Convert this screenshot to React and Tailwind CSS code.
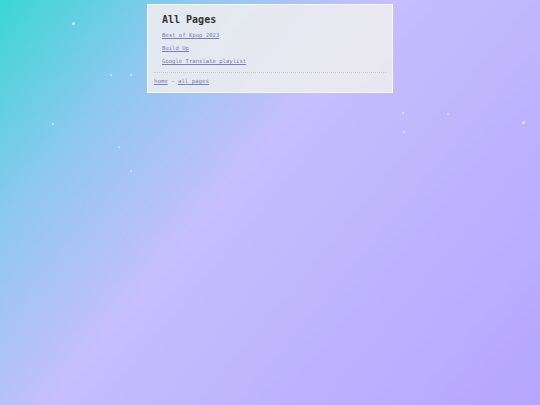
import React from 'react';

const pages = ['Best of Kpop 2023', 'Build Up', 'Google Translate playlist'];

const sparkles = [
  [72, 22, 3],
  [110, 74, 2],
  [130, 74, 2],
  [52, 123, 2],
  [118, 146, 2],
  [130, 170, 2],
  [403, 131, 2],
  [447, 113, 2],
  [522, 121, 3],
  [402, 112, 2],
];

const App = () => {
  return (
    <div className="relative w-[540px] h-[405px] overflow-hidden bg-[linear-gradient(130deg,#3bd6d6_0%,#8fc8ef_22%,#c6befd_44%,#b5a5ff_100%)] font-['DejaVu_Sans_Mono',monospace]">
      {sparkles.map(([x, y, s], i) => (
        <span
          key={i}
          className="absolute rounded-full bg-white/60"
          style={{ left: x, top: y, width: s, height: s }}
        />
      ))}
      <div className="flex justify-center pt-[4px]">
        <div className="w-[246px] h-[89px] bg-[#ececef]/90 border border-white/70 px-[6px] pt-[8px]">
          <div className="pl-[8px]">
            <h1 className="text-[10px] leading-[14px] font-bold text-[#333]">All Pages</h1>
            <ul className="flex flex-col gap-[6px] mt-[5px] text-[5.6px] leading-[7px]">
              {pages.map(p => (
                <li key={p}>
                  <a href="#" className="text-[#7d7db5] underline">{p}</a>
                </li>
              ))}
            </ul>
          </div>
          <div className="mt-[7px] border-t border-dotted border-[#c8c8d0]" />
          <div className="mt-[5px] text-[5.7px] leading-[7px] text-[#7d7db5]">
            <a href="#" className="underline">home</a>
            <span className="text-[#777]"> - </span>
            <a href="#" className="underline">all pages</a>
          </div>
        </div>
      </div>
    </div>
  );
};

export default App;
